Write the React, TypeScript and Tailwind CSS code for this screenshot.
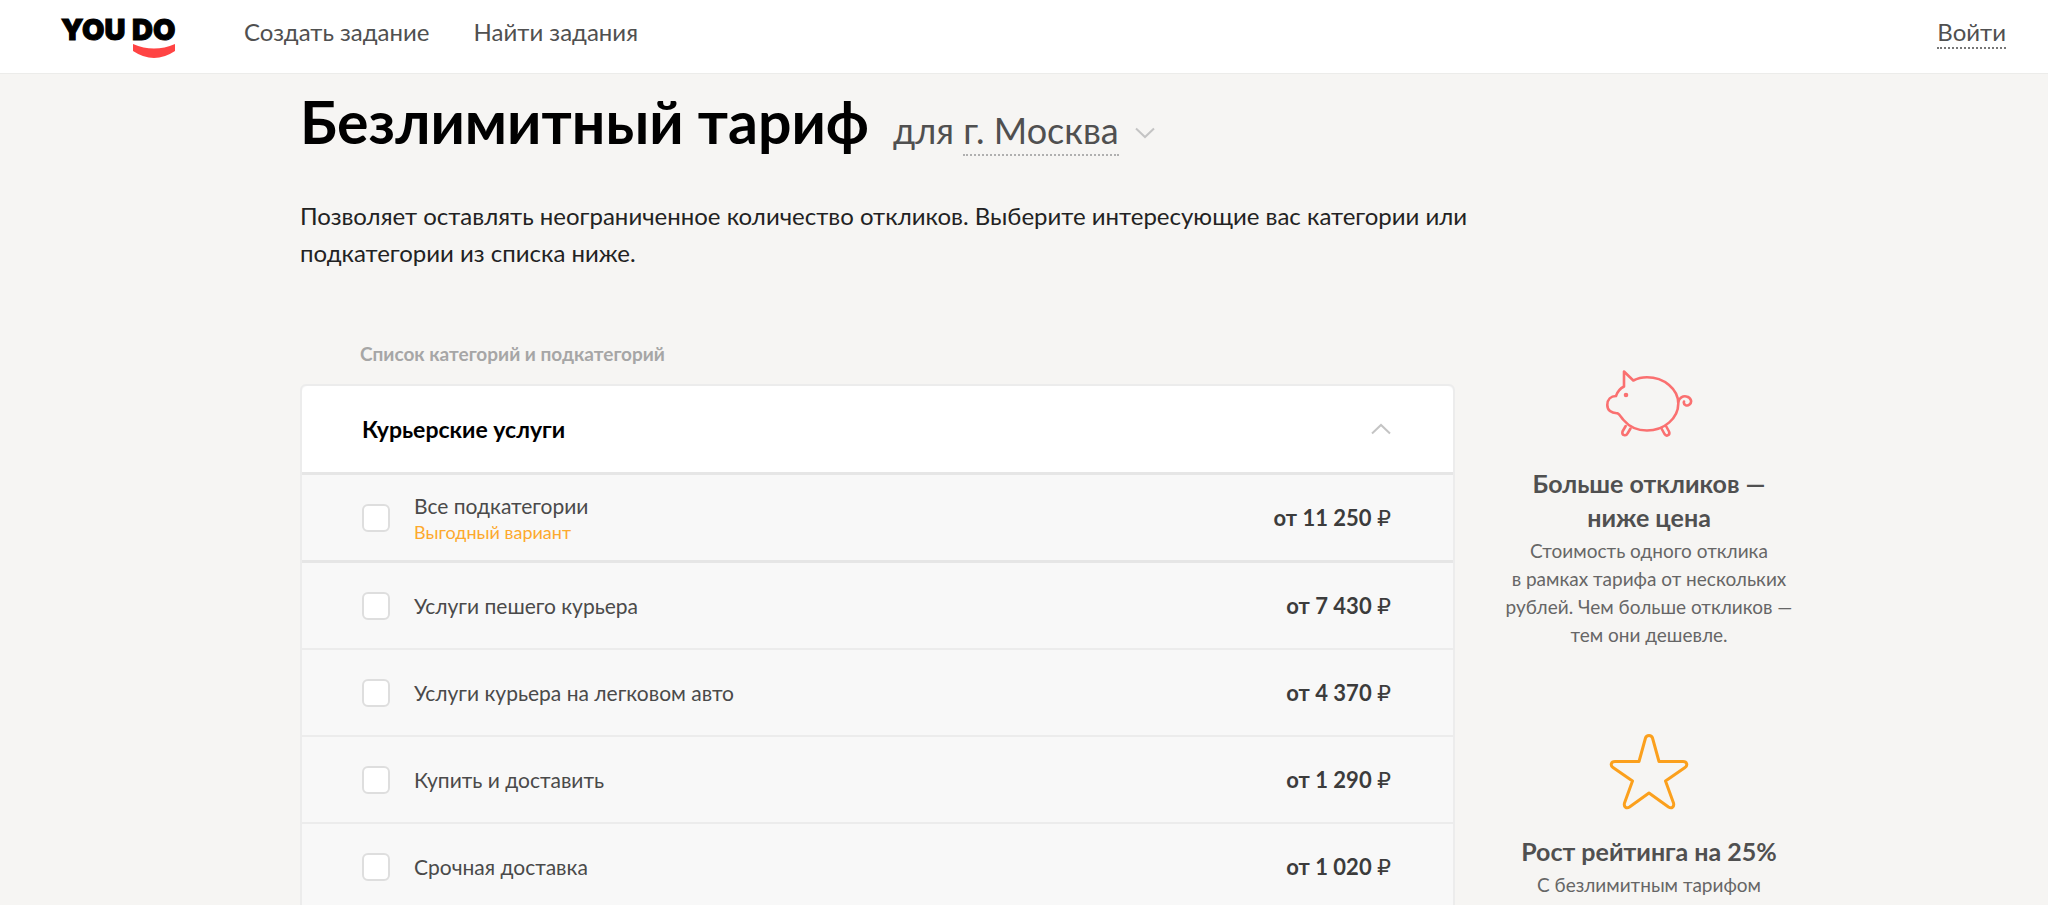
import { useState } from "react";

interface Category {
    id: string;
    title: string;
    price: string;
    hint?: string;
}

interface Benefit {
    icon: "pig" | "star";
    title: string[];
    text: string[];
}

const CATEGORIES: Category[] = [
    { id: "all", title: "Все подкатегории", price: "11 250", hint: "Выгодный вариант" },
    { id: "walk", title: "Услуги пешего курьера", price: "7 430" },
    { id: "car", title: "Услуги курьера на легковом авто", price: "4 370" },
    { id: "buy", title: "Купить и доставить", price: "1 290" },
    { id: "urgent", title: "Срочная доставка", price: "1 020" },
];

const BENEFITS: Benefit[] = [
    {
        icon: "pig",
        title: ["Больше откликов —", "ниже цена"],
        text: [
            "Стоимость одного отклика",
            "в рамках тарифа от нескольких",
            "рублей. Чем больше откликов —",
            "тем они дешевле.",
        ],
    },
    {
        icon: "star",
        title: ["Рост рейтинга на 25%"],
        text: ["С безлимитным тарифом"],
    },
];

function Logo() {
    return (
        <svg width="120" height="54" viewBox="0 -6 120 54" role="img" aria-label="YouDo">
            <g fontFamily="Inter, Lato, sans-serif" fontWeight="900" fontSize="29" fill="#000" stroke="#000" strokeWidth="1">
                <text x="1" y="25">YOU</text>
                <text x="72" y="25">DO</text>
            </g>
            <path d="M73 29 Q94 38 115 29 V36 Q94 50 73 36 Z" fill="#ff4444" />
        </svg>
    );
}

function Chevron({ up = false }: { up?: boolean }) {
    return (
        <svg width="20" height="12" viewBox="0 0 20 12" fill="none" stroke="#c4c4c4" strokeWidth="2" aria-hidden="true">
            <path d={up ? "M1 10.5 10 2l9 8.5" : "M1 1.5 10 10l9-8.5"} />
        </svg>
    );
}

function PigIcon() {
    return (
        <svg width="88" height="72" viewBox="0 0 88 72" fill="none" stroke="#fa7070" strokeWidth="2.6" strokeLinejoin="round" strokeLinecap="round" aria-hidden="true">
            <path d="M19 1.5L28.3 10.5C33 8 38 7.2 42 7.2C59 7.2 73.3 19 73.3 33.5C73.3 48.5 59 60.5 42 60.5C33 60.5 24 56.5 18.5 50C16 47 14.5 44 12.5 43.2C6 43.5 2.3 40 2.3 35C2.3 29.5 6 26.2 11 26C12.5 21.5 15 18.5 19 16.5Z" />
            <path d="M73.3 32C74 28 78 25.5 81.5 26.5C86 27.5 87.5 32 84.5 34.5C82 36.5 78 35 79 31.5" />
            <path d="M20.7 56L17.5 61.5C16.5 65.5 21 66.5 22.5 63.5L25.5 58.5" />
            <path d="M56.5 58.5L59.5 64C61.5 67 65.5 65 64 61.5L61 56" />
            <circle cx="21" cy="25" r="1" fill="#fa7070" />
        </svg>
    );
}

function StarIcon() {
    return (
        <svg width="80" height="77" viewBox="0 0 80 77" fill="none" stroke="#fba01d" strokeWidth="3" strokeLinejoin="round" aria-hidden="true">
            <path d="M36.5 5c1-3.5 6-3.5 7 0L50 28.5h24c4 0 5 4 2 6L56.5 48l8 22c1 4-2 6-5 4L40 60 20.5 74c-3 2-6 0-5-4l8-22L4 34.5c-3-2-2-6 2-6h24z" />
        </svg>
    );
}

function CategoryRow({ category }: { category: Category }) {
    const [checked, setChecked] = useState(false);

    return (
        <li className={category.hint ? "border-b-[3px] border-[#e6e6e6]" : "border-b-2 border-[#ececec]"}>
            <label className="flex min-h-[85px] cursor-pointer items-center pr-[62px] pl-[60px]">
                <input
                    type="checkbox"
                    name={category.id}
                    checked={checked}
                    onChange={() => setChecked(!checked)}
                    className="size-7 shrink-0 appearance-none rounded-md border-2 border-[#dedede] bg-white checked:bg-[#fba01d]"
                />
                <span className="ml-6 flex-1">
                    <span className="block text-[21px] leading-7 text-[#4a4a4a]">{category.title}</span>
                    {category.hint && (
                        <span className="block text-lg leading-6 text-[#fda92d]">{category.hint}</span>
                    )}
                </span>
                <span className="text-[22px] font-bold text-[#3c3c3c]">
                    от {category.price} <span className="font-['DejaVu_Sans',sans-serif] font-normal">₽</span>
                </span>
            </label>
        </li>
    );
}

export default function App() {
    const [open, setOpen] = useState(true);

    return (
        <div className="min-h-screen bg-[#f6f5f3] font-['Lato',sans-serif] text-[#505050]">
            <header className="flex h-[74px] items-start border-b border-[#ececea] bg-white pr-[42px] pl-[60px]">
                <a href="#" className="mt-[9px]">
                    <Logo />
                </a>
                <nav className="mt-4 ml-16 flex gap-11 text-2xl">
                    <a href="#create">Создать задание</a>
                    <a href="#find">Найти задания</a>
                </nav>
                <a href="#login" className="mt-[17px] ml-auto border-b-2 border-dotted border-[#777] text-2xl leading-[30px]">
                    Войти
                </a>
            </header>

            <div className="mx-auto max-w-[1546px] pl-[49px]">
                <div className="flex items-baseline pt-[14px]">
                    <h1 className="text-[59px] leading-[68px] font-bold text-black">Безлимитный тариф</h1>
                    <p className="ml-6 text-4xl">
                        для{" "}
                        <button type="button" className="inline-flex cursor-pointer items-center gap-4">
                            <span className="border-b-2 border-dotted border-[#b0b0b0] pb-1">г. Москва</span>
                            <Chevron />
                        </button>
                    </p>
                </div>

                <p className="mt-[41px] max-w-[1180px] text-2xl leading-[37px] text-[#222]">
                    Позволяет оставлять неограниченное количество откликов. Выберите интересующие вас категории или
                    подкатегории из списка ниже.
                </p>

                <div className="mt-[69px] flex gap-[46px]">
                    <main className="min-w-0 flex-1">
                        <h2 className="pl-[60px] text-[19px] leading-7 font-bold text-[#a6a6a6]">
                            Список категорий и подкатегорий
                        </h2>

                        <section className="mt-4 rounded-md border-2 border-[#ececec] bg-[#f8f8f8]">
                            <button
                                type="button"
                                aria-expanded={open}
                                onClick={() => setOpen(!open)}
                                className="flex h-[89px] w-full cursor-pointer items-center justify-between rounded-t-md border-b-[3px] border-[#e6e6e6] bg-white pr-[62px] pl-[60px] text-[23px] font-bold text-black"
                            >
                                Курьерские услуги
                                <Chevron up={open} />
                            </button>
                            {open && (
                                <ul>
                                    {CATEGORIES.map((category) => (
                                        <CategoryRow key={category.id} category={category} />
                                    ))}
                                </ul>
                            )}
                        </section>
                    </main>

                    <aside className="flex w-[296px] shrink-0 flex-col gap-[84px] pt-[30px] text-center">
                        {BENEFITS.map((benefit) => (
                            <section key={benefit.icon} className="flex flex-col items-center">
                                {benefit.icon === "pig" ? <PigIcon /> : <StarIcon />}
                                <h3 className="mt-6 text-[25px] leading-[34px] font-bold">
                                    {benefit.title.map((line) => (
                                        <span key={line} className="block">{line}</span>
                                    ))}
                                </h3>
                                <p className="mt-[3px] text-[19px] leading-7 whitespace-nowrap text-[#666]">
                                    {benefit.text.map((line) => (
                                        <span key={line} className="block">{line}</span>
                                    ))}
                                </p>
                            </section>
                        ))}
                    </aside>
                </div>
            </div>
        </div>
    );
}
